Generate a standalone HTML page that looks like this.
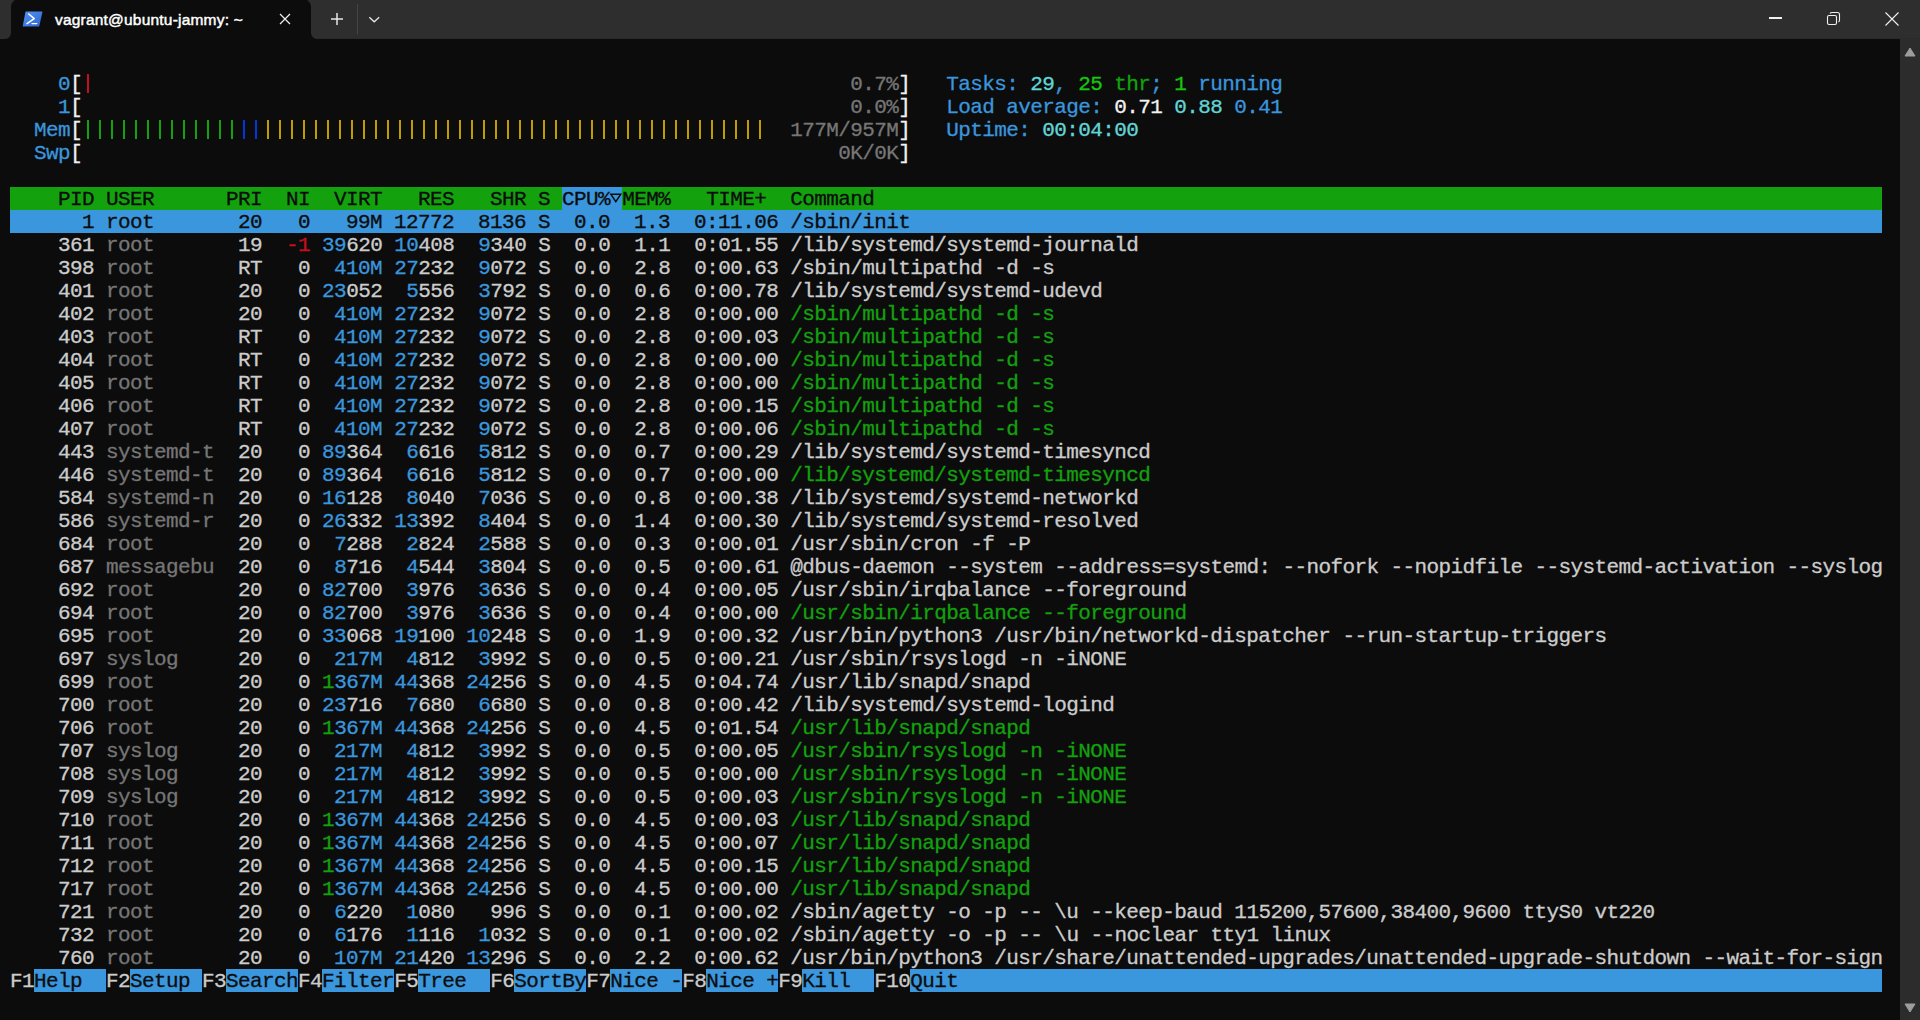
<!DOCTYPE html>
<html><head><meta charset="utf-8"><title>htop</title>
<style>
html,body{margin:0;padding:0;}
body{width:1920px;height:1020px;background:#0c0c0c;position:relative;overflow:hidden;}
.tb{position:absolute;left:0;top:0;width:1920px;height:39px;background:#2e2e2e;}
.term{position:absolute;left:0;top:39px;width:1900px;height:981px;background:#0c0c0c;}
.sb{position:absolute;left:1900px;top:39px;width:20px;height:981px;background:#2c2c2c;}
.r{position:absolute;left:10px;height:23px;line-height:25px;white-space:pre;
  font-family:"Liberation Mono",monospace;font-size:21px;letter-spacing:-0.6px;-webkit-text-stroke:0.3px currentColor;}
.r span{display:inline-block;height:23px;vertical-align:top;}
.r span{position:relative;}
.bar{position:absolute;width:2.8px;height:19px;}
.title{position:absolute;left:55px;top:11px;font-family:"Liberation Sans",sans-serif;font-size:15.5px;
  font-weight:normal;-webkit-text-stroke:0.45px #ffffff;color:#ffffff;white-space:pre;letter-spacing:0.2px;}
.bk{color:#0c0c0c}
.re{color:#c50f1f}
.gr{color:#13a10e}
.ye{color:#c19c00}
.bl{color:#0037da}
.cy{color:#3a96dd}
.wh{color:#cccccc}
.Bk{color:#767676}
.Gr{color:#16c60c}
.Cy{color:#61d6d6}
.Wh{color:#f2f2f2}
.bbk{background:#0c0c0c}
.bre{background:#c50f1f}
.bgr{background:#13a10e}
.bye{background:#c19c00}
.bbl{background:#0037da}
.bcy{background:#3a96dd}
.bwh{background:#cccccc}
.bBk{background:#767676}
.bGr{background:#16c60c}
.bCy{background:#61d6d6}
.bWh{background:#f2f2f2}
</style></head><body>
<div class="tb"></div>
<svg style="position:absolute;left:0;top:0" width="340" height="40">
<path d="M5 39 A6 6 0 0 0 11 33 L11 7 A8 8 0 0 1 19 -1 L303 -1 A8 8 0 0 1 311 7 L311 33 A6 6 0 0 0 317 39 Z" fill="#0c0c0c"/>
</svg>
<div style="position:absolute;left:317px;top:38px;width:1603px;height:1px;background:#2a2a2a"></div>
<div class="term"></div>
<div class="sb"></div>
<!-- tab icon -->
<svg style="position:absolute;left:0;top:0" width="50" height="39">
<defs><linearGradient id="pg" x1="0" y1="0" x2="1" y2="1"><stop offset="0" stop-color="#5193f5"/><stop offset="1" stop-color="#2f66d0"/></linearGradient></defs>
<path d="M26 11.6 L42 11.6 Q42.6 11.6 42.4 12.3 L39.3 26 Q39.2 26.5 38.6 26.5 L23.2 26.5 Q22.6 26.5 22.8 25.8 L25.4 12.2 Q25.5 11.6 26 11.6 Z" fill="url(#pg)"/>
<path d="M28.7 14 L34.2 18.6 L27 23.6" stroke="#fff" stroke-width="1.5" fill="none" stroke-linecap="round" stroke-linejoin="round"/>
<path d="M32 23.6 L36.8 23.6" stroke="#fff" stroke-width="1.4" stroke-linecap="round"/>
</svg>
<div class="title">vagrant@ubuntu-jammy: ~</div>
<!-- tab close -->
<svg style="position:absolute;left:278.5px;top:13px" width="12" height="12"><path d="M1 1 L11 11 M11 1 L1 11" stroke="#f0f0f0" stroke-width="1.2"/></svg>
<!-- new tab + -->
<svg style="position:absolute;left:330px;top:12px" width="14" height="14"><path d="M7 1 V13 M1 7 H13" stroke="#e6e6e6" stroke-width="1.5"/></svg>
<div style="position:absolute;left:357px;top:4px;width:1px;height:30px;background:#454545"></div>
<svg style="position:absolute;left:368px;top:16px" width="12" height="8"><path d="M1.3 1.2 L6.2 5.8 L11.2 1.2" stroke="#e6e6e6" stroke-width="1.3" fill="none"/></svg>
<!-- window controls -->
<div style="position:absolute;left:1769px;top:17px;width:13px;height:1.5px;background:#f0f0f0"></div>
<svg style="position:absolute;left:1826px;top:11px" width="16" height="16"><rect x="1.5" y="4.5" width="9" height="9" rx="1.5" fill="none" stroke="#f0f0f0" stroke-width="1.1"/><path d="M4 2.5 Q4.5 1.5 6 1.5 L11.5 1.5 Q13.5 1.5 13.5 3.5 L13.5 9 Q13.5 10.5 12.5 11" fill="none" stroke="#f0f0f0" stroke-width="1.1"/></svg>
<svg style="position:absolute;left:1884px;top:11px" width="16" height="16"><path d="M1.5 1.5 L14.5 14.5 M14.5 1.5 L1.5 14.5" stroke="#f0f0f0" stroke-width="1.1"/></svg>
<!-- scrollbar arrows -->
<svg style="position:absolute;left:1904px;top:47px" width="12" height="10"><path d="M6 1 L11 9 L1 9 Z" fill="#9d9d9d" stroke="#9d9d9d" stroke-width="1" stroke-linejoin="round"/></svg>
<svg style="position:absolute;left:1904px;top:1003px" width="12" height="10"><path d="M1 1 L11 1 L6 9 Z" fill="#9d9d9d" stroke="#9d9d9d" stroke-width="1" stroke-linejoin="round"/></svg>
<div class="r" style="top:72px"><span class="wh">    </span><span class="cy">0</span><span class="Wh">[</span><span class="re"> </span><span class="wh">                                                               </span><span class="Bk">0.7%</span><span class="Wh">]</span><span class="wh">   </span><span class="cy">Tasks: </span><span class="Cy">29</span><span class="cy">, </span><span class="Gr">25</span><span class="gr"> thr</span><span class="cy">; </span><span class="Gr">1</span><span class="cy"> running</span></div>
<div class="r" style="top:95px"><span class="wh">    </span><span class="cy">1</span><span class="Wh">[</span><span class="wh">                                                                </span><span class="Bk">0.0%</span><span class="Wh">]</span><span class="wh">   </span><span class="cy">Load average: </span><span class="Wh">0.71 </span><span class="Cy">0.88 </span><span class="cy">0.41</span></div>
<div class="r" style="top:118px"><span class="wh">  </span><span class="cy">Mem</span><span class="Wh">[</span><span class="wh">                                                         </span><span class="wh">  </span><span class="Bk">177M/957M</span><span class="Wh">]</span><span class="wh">   </span><span class="cy">Uptime: </span><span class="Cy">00:04:00</span></div>
<div class="r" style="top:141px"><span class="wh">  </span><span class="cy">Swp</span><span class="Wh">[</span><span class="wh">                                                               </span><span class="Bk">0K/0K</span><span class="Wh">]</span></div>
<div class="r" style="top:187px"><span class="bk bgr">    PID USER      PRI  NI  VIRT   RES   SHR S </span><span class="bk bcy">CPU% </span><span class="bk bgr">MEM%   TIME+  Command                                                                                    </span></div>
<div class="r" style="top:210px"><span class="bk bcy">      1 root       20   0   99M 12772  8136 S  0.0  1.3  0:11.06 /sbin/init                                                                                 </span></div>
<div class="r" style="top:233px"><span class="wh">    361 </span><span class="Bk">root     </span><span class="wh">  19 </span><span class="re"> -1</span><span class="wh"> </span><span class="wh"></span><span class="cy">39</span><span class="wh">620</span><span class="wh"> </span><span class="wh"></span><span class="cy">10</span><span class="wh">408</span><span class="wh"> </span><span class="wh"> </span><span class="cy">9</span><span class="wh">340</span><span class="wh"> S  0.0  1.1  0:01.55 </span><span class="wh">/lib/systemd/systemd-journald</span></div>
<div class="r" style="top:256px"><span class="wh">    398 </span><span class="Bk">root     </span><span class="wh">  RT </span><span class="wh">  0</span><span class="wh"> </span><span class="cy"> 410M</span><span class="wh"> </span><span class="wh"></span><span class="cy">27</span><span class="wh">232</span><span class="wh"> </span><span class="wh"> </span><span class="cy">9</span><span class="wh">072</span><span class="wh"> S  0.0  2.8  0:00.63 </span><span class="wh">/sbin/multipathd -d -s</span></div>
<div class="r" style="top:279px"><span class="wh">    401 </span><span class="Bk">root     </span><span class="wh">  20 </span><span class="wh">  0</span><span class="wh"> </span><span class="wh"></span><span class="cy">23</span><span class="wh">052</span><span class="wh"> </span><span class="wh"> </span><span class="cy">5</span><span class="wh">556</span><span class="wh"> </span><span class="wh"> </span><span class="cy">3</span><span class="wh">792</span><span class="wh"> S  0.0  0.6  0:00.78 </span><span class="wh">/lib/systemd/systemd-udevd</span></div>
<div class="r" style="top:302px"><span class="wh">    402 </span><span class="Bk">root     </span><span class="wh">  20 </span><span class="wh">  0</span><span class="wh"> </span><span class="cy"> 410M</span><span class="wh"> </span><span class="wh"></span><span class="cy">27</span><span class="wh">232</span><span class="wh"> </span><span class="wh"> </span><span class="cy">9</span><span class="wh">072</span><span class="wh"> S  0.0  2.8  0:00.00 </span><span class="gr">/sbin/multipathd -d -s</span></div>
<div class="r" style="top:325px"><span class="wh">    403 </span><span class="Bk">root     </span><span class="wh">  RT </span><span class="wh">  0</span><span class="wh"> </span><span class="cy"> 410M</span><span class="wh"> </span><span class="wh"></span><span class="cy">27</span><span class="wh">232</span><span class="wh"> </span><span class="wh"> </span><span class="cy">9</span><span class="wh">072</span><span class="wh"> S  0.0  2.8  0:00.03 </span><span class="gr">/sbin/multipathd -d -s</span></div>
<div class="r" style="top:348px"><span class="wh">    404 </span><span class="Bk">root     </span><span class="wh">  RT </span><span class="wh">  0</span><span class="wh"> </span><span class="cy"> 410M</span><span class="wh"> </span><span class="wh"></span><span class="cy">27</span><span class="wh">232</span><span class="wh"> </span><span class="wh"> </span><span class="cy">9</span><span class="wh">072</span><span class="wh"> S  0.0  2.8  0:00.00 </span><span class="gr">/sbin/multipathd -d -s</span></div>
<div class="r" style="top:371px"><span class="wh">    405 </span><span class="Bk">root     </span><span class="wh">  RT </span><span class="wh">  0</span><span class="wh"> </span><span class="cy"> 410M</span><span class="wh"> </span><span class="wh"></span><span class="cy">27</span><span class="wh">232</span><span class="wh"> </span><span class="wh"> </span><span class="cy">9</span><span class="wh">072</span><span class="wh"> S  0.0  2.8  0:00.00 </span><span class="gr">/sbin/multipathd -d -s</span></div>
<div class="r" style="top:394px"><span class="wh">    406 </span><span class="Bk">root     </span><span class="wh">  RT </span><span class="wh">  0</span><span class="wh"> </span><span class="cy"> 410M</span><span class="wh"> </span><span class="wh"></span><span class="cy">27</span><span class="wh">232</span><span class="wh"> </span><span class="wh"> </span><span class="cy">9</span><span class="wh">072</span><span class="wh"> S  0.0  2.8  0:00.15 </span><span class="gr">/sbin/multipathd -d -s</span></div>
<div class="r" style="top:417px"><span class="wh">    407 </span><span class="Bk">root     </span><span class="wh">  RT </span><span class="wh">  0</span><span class="wh"> </span><span class="cy"> 410M</span><span class="wh"> </span><span class="wh"></span><span class="cy">27</span><span class="wh">232</span><span class="wh"> </span><span class="wh"> </span><span class="cy">9</span><span class="wh">072</span><span class="wh"> S  0.0  2.8  0:00.06 </span><span class="gr">/sbin/multipathd -d -s</span></div>
<div class="r" style="top:440px"><span class="wh">    443 </span><span class="Bk">systemd-t</span><span class="wh">  20 </span><span class="wh">  0</span><span class="wh"> </span><span class="wh"></span><span class="cy">89</span><span class="wh">364</span><span class="wh"> </span><span class="wh"> </span><span class="cy">6</span><span class="wh">616</span><span class="wh"> </span><span class="wh"> </span><span class="cy">5</span><span class="wh">812</span><span class="wh"> S  0.0  0.7  0:00.29 </span><span class="wh">/lib/systemd/systemd-timesyncd</span></div>
<div class="r" style="top:463px"><span class="wh">    446 </span><span class="Bk">systemd-t</span><span class="wh">  20 </span><span class="wh">  0</span><span class="wh"> </span><span class="wh"></span><span class="cy">89</span><span class="wh">364</span><span class="wh"> </span><span class="wh"> </span><span class="cy">6</span><span class="wh">616</span><span class="wh"> </span><span class="wh"> </span><span class="cy">5</span><span class="wh">812</span><span class="wh"> S  0.0  0.7  0:00.00 </span><span class="gr">/lib/systemd/systemd-timesyncd</span></div>
<div class="r" style="top:486px"><span class="wh">    584 </span><span class="Bk">systemd-n</span><span class="wh">  20 </span><span class="wh">  0</span><span class="wh"> </span><span class="wh"></span><span class="cy">16</span><span class="wh">128</span><span class="wh"> </span><span class="wh"> </span><span class="cy">8</span><span class="wh">040</span><span class="wh"> </span><span class="wh"> </span><span class="cy">7</span><span class="wh">036</span><span class="wh"> S  0.0  0.8  0:00.38 </span><span class="wh">/lib/systemd/systemd-networkd</span></div>
<div class="r" style="top:509px"><span class="wh">    586 </span><span class="Bk">systemd-r</span><span class="wh">  20 </span><span class="wh">  0</span><span class="wh"> </span><span class="wh"></span><span class="cy">26</span><span class="wh">332</span><span class="wh"> </span><span class="wh"></span><span class="cy">13</span><span class="wh">392</span><span class="wh"> </span><span class="wh"> </span><span class="cy">8</span><span class="wh">404</span><span class="wh"> S  0.0  1.4  0:00.30 </span><span class="wh">/lib/systemd/systemd-resolved</span></div>
<div class="r" style="top:532px"><span class="wh">    684 </span><span class="Bk">root     </span><span class="wh">  20 </span><span class="wh">  0</span><span class="wh"> </span><span class="wh"> </span><span class="cy">7</span><span class="wh">288</span><span class="wh"> </span><span class="wh"> </span><span class="cy">2</span><span class="wh">824</span><span class="wh"> </span><span class="wh"> </span><span class="cy">2</span><span class="wh">588</span><span class="wh"> S  0.0  0.3  0:00.01 </span><span class="wh">/usr/sbin/cron -f -P</span></div>
<div class="r" style="top:555px"><span class="wh">    687 </span><span class="Bk">messagebu</span><span class="wh">  20 </span><span class="wh">  0</span><span class="wh"> </span><span class="wh"> </span><span class="cy">8</span><span class="wh">716</span><span class="wh"> </span><span class="wh"> </span><span class="cy">4</span><span class="wh">544</span><span class="wh"> </span><span class="wh"> </span><span class="cy">3</span><span class="wh">804</span><span class="wh"> S  0.0  0.5  0:00.61 </span><span class="wh">@dbus-daemon --system --address=systemd: --nofork --nopidfile --systemd-activation --syslog</span></div>
<div class="r" style="top:578px"><span class="wh">    692 </span><span class="Bk">root     </span><span class="wh">  20 </span><span class="wh">  0</span><span class="wh"> </span><span class="wh"></span><span class="cy">82</span><span class="wh">700</span><span class="wh"> </span><span class="wh"> </span><span class="cy">3</span><span class="wh">976</span><span class="wh"> </span><span class="wh"> </span><span class="cy">3</span><span class="wh">636</span><span class="wh"> S  0.0  0.4  0:00.05 </span><span class="wh">/usr/sbin/irqbalance --foreground</span></div>
<div class="r" style="top:601px"><span class="wh">    694 </span><span class="Bk">root     </span><span class="wh">  20 </span><span class="wh">  0</span><span class="wh"> </span><span class="wh"></span><span class="cy">82</span><span class="wh">700</span><span class="wh"> </span><span class="wh"> </span><span class="cy">3</span><span class="wh">976</span><span class="wh"> </span><span class="wh"> </span><span class="cy">3</span><span class="wh">636</span><span class="wh"> S  0.0  0.4  0:00.00 </span><span class="gr">/usr/sbin/irqbalance --foreground</span></div>
<div class="r" style="top:624px"><span class="wh">    695 </span><span class="Bk">root     </span><span class="wh">  20 </span><span class="wh">  0</span><span class="wh"> </span><span class="wh"></span><span class="cy">33</span><span class="wh">068</span><span class="wh"> </span><span class="wh"></span><span class="cy">19</span><span class="wh">100</span><span class="wh"> </span><span class="wh"></span><span class="cy">10</span><span class="wh">248</span><span class="wh"> S  0.0  1.9  0:00.32 </span><span class="wh">/usr/bin/python3 /usr/bin/networkd-dispatcher --run-startup-triggers</span></div>
<div class="r" style="top:647px"><span class="wh">    697 </span><span class="Bk">syslog   </span><span class="wh">  20 </span><span class="wh">  0</span><span class="wh"> </span><span class="cy"> 217M</span><span class="wh"> </span><span class="wh"> </span><span class="cy">4</span><span class="wh">812</span><span class="wh"> </span><span class="wh"> </span><span class="cy">3</span><span class="wh">992</span><span class="wh"> S  0.0  0.5  0:00.21 </span><span class="wh">/usr/sbin/rsyslogd -n -iNONE</span></div>
<div class="r" style="top:670px"><span class="wh">    699 </span><span class="Bk">root     </span><span class="wh">  20 </span><span class="wh">  0</span><span class="wh"> </span><span class="wh"></span><span class="gr">1</span><span class="cy">367M</span><span class="wh"> </span><span class="wh"></span><span class="cy">44</span><span class="wh">368</span><span class="wh"> </span><span class="wh"></span><span class="cy">24</span><span class="wh">256</span><span class="wh"> S  0.0  4.5  0:04.74 </span><span class="wh">/usr/lib/snapd/snapd</span></div>
<div class="r" style="top:693px"><span class="wh">    700 </span><span class="Bk">root     </span><span class="wh">  20 </span><span class="wh">  0</span><span class="wh"> </span><span class="wh"></span><span class="cy">23</span><span class="wh">716</span><span class="wh"> </span><span class="wh"> </span><span class="cy">7</span><span class="wh">680</span><span class="wh"> </span><span class="wh"> </span><span class="cy">6</span><span class="wh">680</span><span class="wh"> S  0.0  0.8  0:00.42 </span><span class="wh">/lib/systemd/systemd-logind</span></div>
<div class="r" style="top:716px"><span class="wh">    706 </span><span class="Bk">root     </span><span class="wh">  20 </span><span class="wh">  0</span><span class="wh"> </span><span class="wh"></span><span class="gr">1</span><span class="cy">367M</span><span class="wh"> </span><span class="wh"></span><span class="cy">44</span><span class="wh">368</span><span class="wh"> </span><span class="wh"></span><span class="cy">24</span><span class="wh">256</span><span class="wh"> S  0.0  4.5  0:01.54 </span><span class="gr">/usr/lib/snapd/snapd</span></div>
<div class="r" style="top:739px"><span class="wh">    707 </span><span class="Bk">syslog   </span><span class="wh">  20 </span><span class="wh">  0</span><span class="wh"> </span><span class="cy"> 217M</span><span class="wh"> </span><span class="wh"> </span><span class="cy">4</span><span class="wh">812</span><span class="wh"> </span><span class="wh"> </span><span class="cy">3</span><span class="wh">992</span><span class="wh"> S  0.0  0.5  0:00.05 </span><span class="gr">/usr/sbin/rsyslogd -n -iNONE</span></div>
<div class="r" style="top:762px"><span class="wh">    708 </span><span class="Bk">syslog   </span><span class="wh">  20 </span><span class="wh">  0</span><span class="wh"> </span><span class="cy"> 217M</span><span class="wh"> </span><span class="wh"> </span><span class="cy">4</span><span class="wh">812</span><span class="wh"> </span><span class="wh"> </span><span class="cy">3</span><span class="wh">992</span><span class="wh"> S  0.0  0.5  0:00.00 </span><span class="gr">/usr/sbin/rsyslogd -n -iNONE</span></div>
<div class="r" style="top:785px"><span class="wh">    709 </span><span class="Bk">syslog   </span><span class="wh">  20 </span><span class="wh">  0</span><span class="wh"> </span><span class="cy"> 217M</span><span class="wh"> </span><span class="wh"> </span><span class="cy">4</span><span class="wh">812</span><span class="wh"> </span><span class="wh"> </span><span class="cy">3</span><span class="wh">992</span><span class="wh"> S  0.0  0.5  0:00.03 </span><span class="gr">/usr/sbin/rsyslogd -n -iNONE</span></div>
<div class="r" style="top:808px"><span class="wh">    710 </span><span class="Bk">root     </span><span class="wh">  20 </span><span class="wh">  0</span><span class="wh"> </span><span class="wh"></span><span class="gr">1</span><span class="cy">367M</span><span class="wh"> </span><span class="wh"></span><span class="cy">44</span><span class="wh">368</span><span class="wh"> </span><span class="wh"></span><span class="cy">24</span><span class="wh">256</span><span class="wh"> S  0.0  4.5  0:00.03 </span><span class="gr">/usr/lib/snapd/snapd</span></div>
<div class="r" style="top:831px"><span class="wh">    711 </span><span class="Bk">root     </span><span class="wh">  20 </span><span class="wh">  0</span><span class="wh"> </span><span class="wh"></span><span class="gr">1</span><span class="cy">367M</span><span class="wh"> </span><span class="wh"></span><span class="cy">44</span><span class="wh">368</span><span class="wh"> </span><span class="wh"></span><span class="cy">24</span><span class="wh">256</span><span class="wh"> S  0.0  4.5  0:00.07 </span><span class="gr">/usr/lib/snapd/snapd</span></div>
<div class="r" style="top:854px"><span class="wh">    712 </span><span class="Bk">root     </span><span class="wh">  20 </span><span class="wh">  0</span><span class="wh"> </span><span class="wh"></span><span class="gr">1</span><span class="cy">367M</span><span class="wh"> </span><span class="wh"></span><span class="cy">44</span><span class="wh">368</span><span class="wh"> </span><span class="wh"></span><span class="cy">24</span><span class="wh">256</span><span class="wh"> S  0.0  4.5  0:00.15 </span><span class="gr">/usr/lib/snapd/snapd</span></div>
<div class="r" style="top:877px"><span class="wh">    717 </span><span class="Bk">root     </span><span class="wh">  20 </span><span class="wh">  0</span><span class="wh"> </span><span class="wh"></span><span class="gr">1</span><span class="cy">367M</span><span class="wh"> </span><span class="wh"></span><span class="cy">44</span><span class="wh">368</span><span class="wh"> </span><span class="wh"></span><span class="cy">24</span><span class="wh">256</span><span class="wh"> S  0.0  4.5  0:00.00 </span><span class="gr">/usr/lib/snapd/snapd</span></div>
<div class="r" style="top:900px"><span class="wh">    721 </span><span class="Bk">root     </span><span class="wh">  20 </span><span class="wh">  0</span><span class="wh"> </span><span class="wh"> </span><span class="cy">6</span><span class="wh">220</span><span class="wh"> </span><span class="wh"> </span><span class="cy">1</span><span class="wh">080</span><span class="wh"> </span><span class="wh">  996</span><span class="wh"> S  0.0  0.1  0:00.02 </span><span class="wh">/sbin/agetty -o -p -- \u --keep-baud 115200,57600,38400,9600 ttyS0 vt220</span></div>
<div class="r" style="top:923px"><span class="wh">    732 </span><span class="Bk">root     </span><span class="wh">  20 </span><span class="wh">  0</span><span class="wh"> </span><span class="wh"> </span><span class="cy">6</span><span class="wh">176</span><span class="wh"> </span><span class="wh"> </span><span class="cy">1</span><span class="wh">116</span><span class="wh"> </span><span class="wh"> </span><span class="cy">1</span><span class="wh">032</span><span class="wh"> S  0.0  0.1  0:00.02 </span><span class="wh">/sbin/agetty -o -p -- \u --noclear tty1 linux</span></div>
<div class="r" style="top:946px"><span class="wh">    760 </span><span class="Bk">root     </span><span class="wh">  20 </span><span class="wh">  0</span><span class="wh"> </span><span class="cy"> 107M</span><span class="wh"> </span><span class="wh"></span><span class="cy">21</span><span class="wh">420</span><span class="wh"> </span><span class="wh"></span><span class="cy">13</span><span class="wh">296</span><span class="wh"> S  0.0  2.2  0:00.62 </span><span class="wh">/usr/bin/python3 /usr/share/unattended-upgrades/unattended-upgrade-shutdown --wait-for-sign</span></div>
<div class="r" style="top:969px"><span class="wh">F1</span><span class="bk bcy">Help  </span><span class="wh">F2</span><span class="bk bcy">Setup </span><span class="wh">F3</span><span class="bk bcy">Search</span><span class="wh">F4</span><span class="bk bcy">Filter</span><span class="wh">F5</span><span class="bk bcy">Tree  </span><span class="wh">F6</span><span class="bk bcy">SortBy</span><span class="wh">F7</span><span class="bk bcy">Nice -</span><span class="wh">F8</span><span class="bk bcy">Nice +</span><span class="wh">F9</span><span class="bk bcy">Kill  </span><span class="wh">F10</span><span class="bk bcy">Quit                                                                             </span></div>
<div class="bar" style="left:86.60px;top:73.5px;background:#c50f1f"></div>
<div class="bar" style="left:86.60px;top:119.5px;background:#13a10e"></div>
<div class="bar" style="left:98.60px;top:119.5px;background:#13a10e"></div>
<div class="bar" style="left:110.60px;top:119.5px;background:#13a10e"></div>
<div class="bar" style="left:122.60px;top:119.5px;background:#13a10e"></div>
<div class="bar" style="left:134.60px;top:119.5px;background:#13a10e"></div>
<div class="bar" style="left:146.60px;top:119.5px;background:#13a10e"></div>
<div class="bar" style="left:158.60px;top:119.5px;background:#13a10e"></div>
<div class="bar" style="left:170.60px;top:119.5px;background:#13a10e"></div>
<div class="bar" style="left:182.60px;top:119.5px;background:#13a10e"></div>
<div class="bar" style="left:194.60px;top:119.5px;background:#13a10e"></div>
<div class="bar" style="left:206.60px;top:119.5px;background:#13a10e"></div>
<div class="bar" style="left:218.60px;top:119.5px;background:#13a10e"></div>
<div class="bar" style="left:230.60px;top:119.5px;background:#13a10e"></div>
<div class="bar" style="left:242.60px;top:119.5px;background:#0037da"></div>
<div class="bar" style="left:254.60px;top:119.5px;background:#0037da"></div>
<div class="bar" style="left:266.60px;top:119.5px;background:#c19c00"></div>
<div class="bar" style="left:278.60px;top:119.5px;background:#c19c00"></div>
<div class="bar" style="left:290.60px;top:119.5px;background:#c19c00"></div>
<div class="bar" style="left:302.60px;top:119.5px;background:#c19c00"></div>
<div class="bar" style="left:314.60px;top:119.5px;background:#c19c00"></div>
<div class="bar" style="left:326.60px;top:119.5px;background:#c19c00"></div>
<div class="bar" style="left:338.60px;top:119.5px;background:#c19c00"></div>
<div class="bar" style="left:350.60px;top:119.5px;background:#c19c00"></div>
<div class="bar" style="left:362.60px;top:119.5px;background:#c19c00"></div>
<div class="bar" style="left:374.60px;top:119.5px;background:#c19c00"></div>
<div class="bar" style="left:386.60px;top:119.5px;background:#c19c00"></div>
<div class="bar" style="left:398.60px;top:119.5px;background:#c19c00"></div>
<div class="bar" style="left:410.60px;top:119.5px;background:#c19c00"></div>
<div class="bar" style="left:422.60px;top:119.5px;background:#c19c00"></div>
<div class="bar" style="left:434.60px;top:119.5px;background:#c19c00"></div>
<div class="bar" style="left:446.60px;top:119.5px;background:#c19c00"></div>
<div class="bar" style="left:458.60px;top:119.5px;background:#c19c00"></div>
<div class="bar" style="left:470.60px;top:119.5px;background:#c19c00"></div>
<div class="bar" style="left:482.60px;top:119.5px;background:#c19c00"></div>
<div class="bar" style="left:494.60px;top:119.5px;background:#c19c00"></div>
<div class="bar" style="left:506.60px;top:119.5px;background:#c19c00"></div>
<div class="bar" style="left:518.60px;top:119.5px;background:#c19c00"></div>
<div class="bar" style="left:530.60px;top:119.5px;background:#c19c00"></div>
<div class="bar" style="left:542.60px;top:119.5px;background:#c19c00"></div>
<div class="bar" style="left:554.60px;top:119.5px;background:#c19c00"></div>
<div class="bar" style="left:566.60px;top:119.5px;background:#c19c00"></div>
<div class="bar" style="left:578.60px;top:119.5px;background:#c19c00"></div>
<div class="bar" style="left:590.60px;top:119.5px;background:#c19c00"></div>
<div class="bar" style="left:602.60px;top:119.5px;background:#c19c00"></div>
<div class="bar" style="left:614.60px;top:119.5px;background:#c19c00"></div>
<div class="bar" style="left:626.60px;top:119.5px;background:#c19c00"></div>
<div class="bar" style="left:638.60px;top:119.5px;background:#c19c00"></div>
<div class="bar" style="left:650.60px;top:119.5px;background:#c19c00"></div>
<div class="bar" style="left:662.60px;top:119.5px;background:#c19c00"></div>
<div class="bar" style="left:674.60px;top:119.5px;background:#c19c00"></div>
<div class="bar" style="left:686.60px;top:119.5px;background:#c19c00"></div>
<div class="bar" style="left:698.60px;top:119.5px;background:#c19c00"></div>
<div class="bar" style="left:710.60px;top:119.5px;background:#c19c00"></div>
<div class="bar" style="left:722.60px;top:119.5px;background:#c19c00"></div>
<div class="bar" style="left:734.60px;top:119.5px;background:#c19c00"></div>
<div class="bar" style="left:746.60px;top:119.5px;background:#c19c00"></div>
<div class="bar" style="left:758.60px;top:119.5px;background:#c19c00"></div>
<svg style="position:absolute;left:0;top:0;pointer-events:none" width="700" height="220"><path d="M610.9 194.3 L620.7 194.3 L615.8 201.6 Z" fill="none" stroke="#0c0c0c" stroke-width="1.5" stroke-linejoin="miter"/></svg>
</body></html>
